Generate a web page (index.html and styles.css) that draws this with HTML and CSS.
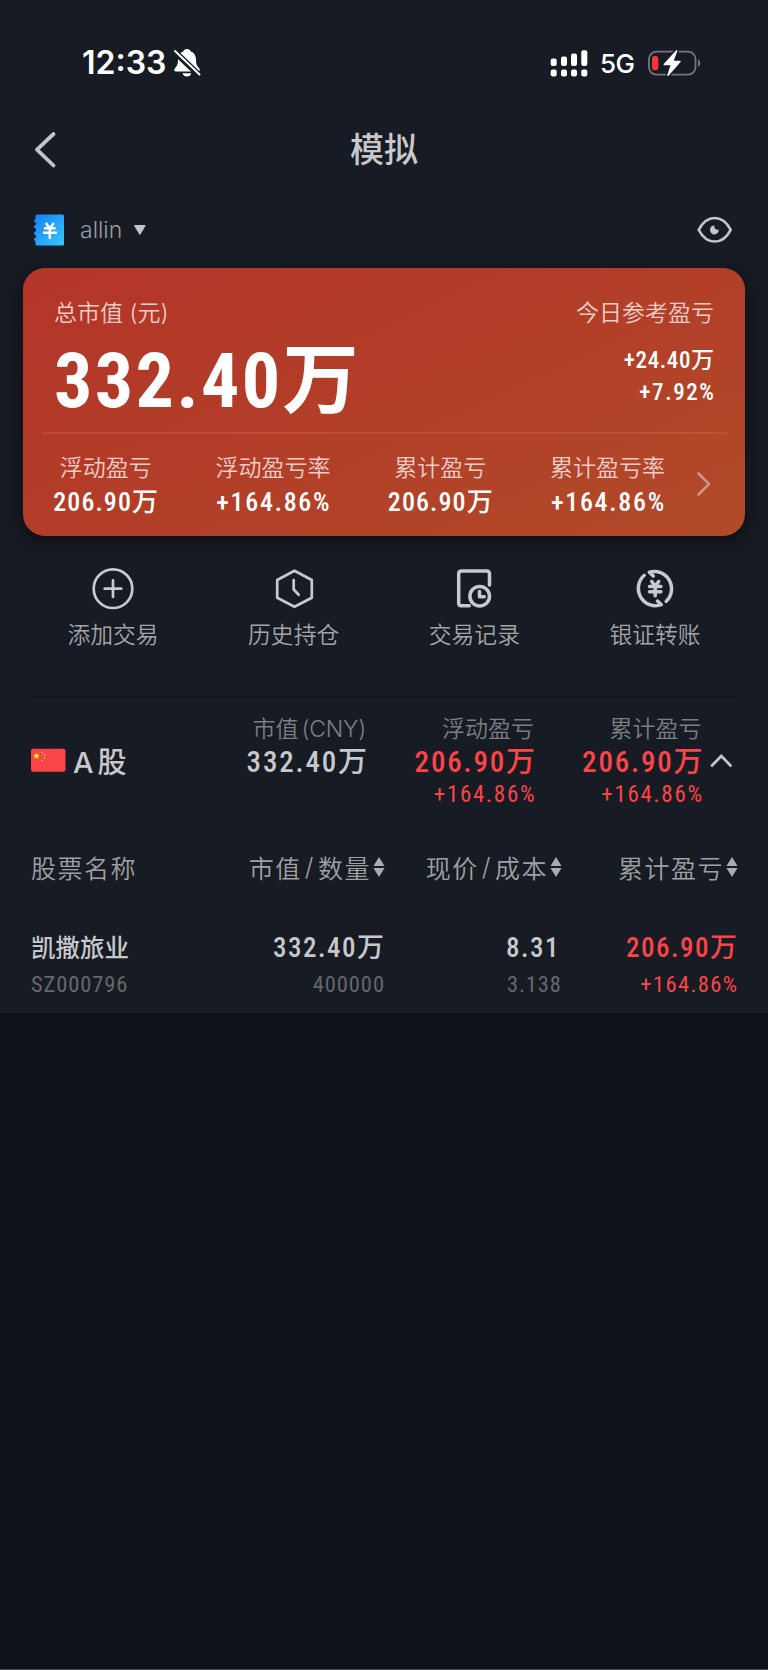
FILE: index.html
```
<!DOCTYPE html>
<html lang="zh-CN">
  <head>
    <meta charset="UTF-8" />
    <meta name="viewport" content="width=device-width, initial-scale=1.0" />
    <title>模拟</title>
    <link rel="stylesheet" href="styles.css">
  </head>
  <body>
    <main class="page">
      <div class="status-bar">
        <span class="time">12:33</span>
        <svg class="bell" width="28" height="30" viewBox="0 0 28 30">
          <path fill="#fff" d="M14 1c-2 0-3.300 1-3.700 2.400C6.500 4.600 5 8 5 12c0 5-1.500 6.500-3.200 8.600C.6 22.200 1.200 23.500 3 23.500h22c1.800 0 2.500-1.300 1.300-2.900C24.500 18.500 23 17 23 12c0-4-1.500-7.400-5.300-8.600C17.300 2 16 1 14 1z"/>
          <path fill="#fff" d="M9.500 25.200h8.800c-.4 2-2.200 3.300-4.400 3.300s-4-1.300-4.400-3.300z"/>
          <path stroke="#161b24" stroke-width="6" d="M1.500 3.500L26 27"/>
          <path stroke="#fff" stroke-width="2" stroke-linecap="round" d="M2 3L26.500 26.500"/>
        </svg>
        <svg class="signal" width="38" height="28" viewBox="0 0 38 28" fill="#fff">
          <rect x="0.700" y="9.500" width="6" height="7.500" rx="2"/>
          <rect x="11" y="7.500" width="6" height="9.500" rx="2"/>
          <rect x="21" y="4.500" width="6" height="12.500" rx="2"/>
          <rect x="31.300" y="1.300" width="6" height="15.700" rx="2"/>
          <rect x="0.700" y="20.500" width="6" height="7" rx="2"/>
          <rect x="11" y="20.500" width="6" height="7" rx="2"/>
          <rect x="21" y="20.500" width="6" height="7" rx="2"/>
          <rect x="31.300" y="20.500" width="6" height="7" rx="2"/>
        </svg>
        <span class="network">5G</span>
        <svg class="battery" width="53" height="28" viewBox="0 0 53 28">
          <rect x="1" y="2.700" width="46.500" height="23" rx="7.500" fill="none" stroke="#74777d" stroke-width="1.800"/>
          <path fill="#74777d" d="M50 10.500c1.500.6 2.300 2 2.300 3.700s-.8 3-2.300 3.600z"/>
          <rect x="4" y="7" width="6.300" height="14.300" rx="3" fill="#fb3436"/>
          <path fill="#fff" stroke="#161b24" stroke-width="3" paint-order="stroke" d="M28 1.500L15.700 15c-.5.700-.2 1.200.5 1.200h6.300L19.300 26c-.3 1.200.8 1.500 1.500.6L32.500 13c.5-.7.200-1.200-.5-1.200h-6.300L29.300 2.300c.3-1.100-.6-1.500-1.300-.8z"/>
        </svg>
      </div>

      <header class="navbar">
        <svg class="back" width="24" height="38" viewBox="0 0 24 38">
          <path d="M20.500 3L4 18.700L20.500 34.500" fill="none" stroke="#c4c4c6" stroke-width="3.800" stroke-linecap="round" stroke-linejoin="round"/>
        </svg>
        <h1>模拟</h1>
      </header>

      <div class="account">
        <svg width="32" height="32" viewBox="0 0 32 32">
          <defs>
            <linearGradient id="book" x1="0" y1="0" x2="1" y2="1">
              <stop offset="0" stop-color="#167dff"/>
              <stop offset="1" stop-color="#35c9ff"/>
            </linearGradient>
          </defs>
          <path fill="url(#book)" d="M4.500.5h24.700c1 0 1.800.8 1.800 1.800v27.400c0 1-.8 1.800-1.800 1.800H4.500c-1.200 0-2-.7-2-1.800v-1.900c0-1.200-1.500-1.300-1.500-2.600s2.300-1.200 2.300-2.700S1 20.800 1 19.200s2.300-1.500 2.300-3.200S1 14.400 1 12.800s2.300-1.500 2.300-3S1 8.400 1 7s1.500-1.400 1.500-2.600V2.300C2.500 1.200 3.300.5 4.500.5z"/>
          <path fill="none" stroke="#fff" stroke-width="2.500" d="M12.800 9l4 5.500 4-5.500M11 14.300h11.600M10 18.700h14M16.800 14v11"/>
        </svg>
        <span class="account-name">allin</span>
        <svg width="14" height="12" viewBox="0 0 14 12"><path fill="#c4c4c6" stroke="#c4c4c6" stroke-linejoin="round" d="M1.500 1.500h10.700L6.900 10.500z"/></svg>
        <svg class="eye" width="36" height="28" viewBox="0 0 36 28">
          <path fill="none" stroke="#c4c4c6" stroke-width="2.600" stroke-linejoin="round" d="M1.700 13.800C6 5.500 11 2 17.700 2s11.700 3.500 16 11.800C29.500 22 24.500 25.500 17.700 25.500S6 22 1.700 13.800z"/>
          <path fill="#c4c4c6" d="M17.300 9.300c-.6 2.800 1.500 4.800 4.500 4.500.1 2.600-1.800 4.600-4.300 4.600s-4.500-2-4.500-4.500 1.800-4.500 4.300-4.600z"/>
        </svg>
      </div>

      <section class="card">
        <div class="summary">
          <div class="total">
            <p class="label">总市值 (元)</p>
            <p class="total-value">332.40<i>万</i></p>
          </div>
          <div class="today">
            <p class="label">今日参考盈亏</p>
            <p class="today-value">+24.40<i>万</i></p>
            <p class="today-value rate">+7.92%</p>
          </div>
        </div>
        <div class="metrics">
          <div class="metric"><p class="label">浮动盈亏</p><p class="metric-value">206.90<i>万</i></p></div>
          <div class="metric"><p class="label">浮动盈亏率</p><p class="metric-value rate">+164.86%</p></div>
          <div class="metric"><p class="label">累计盈亏</p><p class="metric-value">206.90<i>万</i></p></div>
          <div class="metric"><p class="label">累计盈亏率</p><p class="metric-value rate">+164.86%</p></div>
          <svg class="more" width="16" height="26" viewBox="0 0 16 26">
            <path d="M2.500 2.500L13 13L2.500 23.500" fill="none" stroke="#fff" stroke-opacity=".42" stroke-width="2.600" stroke-linecap="round"/>
          </svg>
        </div>
      </section>

      <nav class="actions">
        <a class="action">
          <svg width="42" height="42" viewBox="0 0 42 42">
            <circle cx="21" cy="20.700" r="19.300"/>
            <path d="M21 12.400V29M12.700 20.700h16.600"/>
          </svg>
          <span>添加交易</span>
        </a>
        <a class="action">
          <svg width="42" height="42" viewBox="-1.500 -.5 42 42">
            <path d="M20 2.300l17.300 9.200v17.800L20 38.300 2.700 29.300V11.500z"/>
            <path d="M19.200 11.500V21l5 5.300"/>
          </svg>
          <span>历史持仓</span>
        </a>
        <a class="action heavy">
          <svg width="42" height="42" viewBox="-1 -.5 42 42">
            <path d="M35.500 16.500V5.300c0-1.800-1-2.800-2.800-2.800H7.500c-1.800 0-2.800 1-2.800 2.800v29.200c0 1.800 1 2.800 2.800 2.800h7.800"/>
            <circle cx="25.700" cy="27.700" r="9.800"/>
            <path d="M25.500 23v5.200h4.700"/>
          </svg>
          <span>交易记录</span>
        </a>
        <a class="action heavy">
          <svg width="42" height="42" viewBox="-1 -.5 42 42">
            <path d="M9.300 6.800A17.300 17.300 0 0 0 26.300 36.200L22.500 32.500M31.200 32.800A17.300 17.300 0 0 0 14.300 3.700L18.300 7.500"/>
            <path d="M16.700 13l3.500 4.800 3.500-4.800M14.500 18h11.400M14.500 23.300h11.400M20.200 18v9.300"/>
          </svg>
          <span>银证转账</span>
        </a>
      </nav>

      <section class="market">
        <div class="market-name">
          <svg width="35" height="24" viewBox="0 0 35 24">
            <rect width="34.500" height="23" x="0" y=".7" rx="2" fill="#fb4448"/>
            <path fill="#ff0" d="M5.500 4.500l.9 2.300 2.400.1-1.900 1.500.7 2.400-2.100-1.400-2.100 1.400.7-2.400-1.900-1.500 2.400-.1z"/>
            <path stroke="#ffd91a" stroke-width="1.300" stroke-dasharray="1.300 2.200" fill="none" d="M10.300 4.200C15 5.500 15 11 10.300 12.800"/>
          </svg>
          <strong>A<b>股</b></strong>
        </div>
        <div class="stat">
          <p class="label latin">市值 (CNY)</p>
          <p class="stat-value">332.40<i>万</i></p>
        </div>
        <div class="stat">
          <p class="label">浮动盈亏</p>
          <p class="stat-value up">206.90<i>万</i></p>
          <p class="stat-rate up">+164.86%</p>
        </div>
        <div class="stat">
          <p class="label">累计盈亏</p>
          <p class="stat-value up">206.90<i>万</i></p>
          <p class="stat-rate up">+164.86%</p>
        </div>
        <svg class="collapse" width="24" height="16" viewBox="0 0 24 16">
          <path d="M2 12.500L11.300 3L20.500 12.500" fill="none" stroke="#c4c4c6" stroke-width="2.800" stroke-linecap="round"/>
        </svg>
      </section>

      <section class="holdings">
        <div class="row head">
          <div>股票名称</div>
          <div>市值<em>/</em>数量<svg width="12" height="22" viewBox="0 0 12 22"><path d="M6 1l5.500 9H.5zM.500 12h11L6 21z"/></svg></div>
          <div>现价<em>/</em>成本<svg width="12" height="22" viewBox="0 0 12 22"><path d="M6 1l5.500 9H.5zM.500 12h11L6 21z"/></svg></div>
          <div>累计盈亏<svg width="12" height="22" viewBox="0 0 12 22"><path d="M6 1l5.500 9H.5zM.500 12h11L6 21z"/></svg></div>
        </div>
        <div class="row stock">
          <div><p class="stock-name">凯撒旅业</p><p class="sub">SZ000796</p></div>
          <div><p class="num">332.40<i>万</i></p><p class="sub">400000</p></div>
          <div><p class="num price">8.31</p><p class="sub">3.138</p></div>
          <div><p class="num up">206.90<i>万</i></p><p class="sub up">+164.86%</p></div>
        </div>
      </section>
    </main>
  </body>
</html>
```
FILE: styles.css
```
* {
  box-sizing: border-box;
}
html,
body {
  margin: 0;
  height: 1670px;
}
body {
  background: #0d1118;
  border-bottom: 1px solid #4a4c51;
  color: #c8c8ca;
  font-family: Inter, "Noto Sans CJK SC", sans-serif;
}
p,
h1 {
  margin: 0;
}
i,
em {
  font-style: normal;
}
i {
  letter-spacing: 0;
}
svg {
  display: block;
  flex: none;
}

.page {
  height: 1013px;
  background: #161b24;
}

.status-bar {
  display: flex;
  align-items: center;
  height: 126px;
  padding: 0 67px 0 82px;
  color: #fff;
}
.time {
  width: 91px;
  font-size: 32px;
  font-weight: 600;
  line-height: 40px;
}
.bell {
  margin-right: auto;
}
.network {
  width: 47px;
  margin-right: 13px;
  padding: 1px 0 0 12px;
  font-size: 26px;
  font-weight: 450;
  letter-spacing: -0.5px;
  line-height: 32px;
}

.navbar {
  display: grid;
  grid-template-columns: 48px 1fr 48px;
  align-items: center;
  height: 48px;
  padding: 0 33px;
}
.navbar h1 {
  font-size: 34px;
  font-weight: 500;
  line-height: 48px;
  text-align: center;
}

.account {
  display: flex;
  align-items: center;
  height: 94px;
  padding: 18px 35px 0 33px;
}
.account-name {
  width: 41px;
  margin: 0 12px 0 15px;
  color: #9c9ca0;
  font-size: 23px;
  font-weight: 350;
  line-height: 30px;
}
.eye {
  margin-left: auto;
}

.label {
  font-size: 23px;
  font-weight: 350;
  line-height: 30px;
  white-space: nowrap;
}

.total-value,
.today-value,
.metric-value,
.stat-value,
.stat-rate,
.num,
.sub {
  font-family: Roboto, "Noto Sans CJK SC", sans-serif;
  font-stretch: 85%;
  font-weight: 500;
  white-space: nowrap;
}

.card {
  height: 268px;
  margin: 0 23px;
  border-radius: 22px;
  background: linear-gradient(155deg, #b43529 0%, #b23d28 45%, #b14b29 100%);
  box-shadow: 0 6px 16px rgba(15, 10, 14, 0.75);
  color: #fff;
}
.card .label {
  color: #f3cdc8;
}
.summary {
  display: flex;
  justify-content: space-between;
  height: 166px;
  margin: 0 18px 0 19px;
  padding: 30px 13px 0 12px;
  border-bottom: 2px solid rgba(255, 150, 110, 0.16);
}
.total-value {
  margin-top: 13px;
  font-size: 76px;
  font-weight: 700;
  line-height: 80px;
  letter-spacing: 2.4px;
}
.today {
  text-align: right;
}
.today-value {
  font-size: 23px;
  line-height: 32px;
  letter-spacing: 0.6px;
}
.today .rate {
  margin-right: -1.6px;
  letter-spacing: 1.6px;
}
.today .label {
  margin-bottom: 17px;
}
.metrics {
  display: flex;
  height: 102px;
  margin-left: -1px;
  padding-top: 19px;
}
.metric {
  width: 167.3px;
  text-align: center;
}
.metric-value {
  margin-top: 3px;
  font-size: 26px;
  line-height: 32px;
  letter-spacing: 1.1px;
}
.metric .rate {
  margin-right: -1.7px;
  letter-spacing: 1.7px;
}
.more {
  margin: 18px 0 0 5px;
}

.actions {
  display: grid;
  grid-template-columns: repeat(4, 180.7px);
  justify-content: center;
  height: 160px;
  padding-top: 32px;
}
.action {
  display: flex;
  flex-direction: column;
  align-items: center;
  color: #a4a4a7;
  font-size: 22.8px;
  font-weight: 350;
  line-height: 30px;
}
.action svg {
  margin-bottom: 10px;
  fill: none;
  stroke: #c9c9cb;
  stroke-width: 2.7;
  stroke-linecap: round;
  stroke-linejoin: round;
}
.action.heavy svg {
  stroke-width: 3.5;
}

.market {
  display: flex;
  height: 135px;
  margin: 0 31px;
  padding-top: 17px;
  border-top: 1px solid #101319;
  border-bottom: 1px solid #101319;
}
.market-name {
  display: flex;
  align-items: center;
  width: 168px;
  height: 30px;
  margin-top: 31px;
}
.market-name strong {
  display: flex;
  align-items: baseline;
  gap: 4px;
  margin-left: 7px;
  font-size: 29px;
  font-weight: 500;
}
.market-name b {
  font-weight: 500;
}
.stat {
  width: 167.5px;
  padding-right: 0.5px;
  text-align: right;
}
.stat:nth-child(2) {
  margin-right: 0.5px;
}
.stat .label {
  color: #7d7e82;
}
.latin {
  letter-spacing: -0.2px;
  word-spacing: -3px;
}
.stat-value {
  margin: 2px -1px 0 0;
  font-size: 29px;
  line-height: 32px;
  letter-spacing: 1.8px;
}
.stat-rate {
  margin: 1px -2.2px 0 0;
  font-size: 23px;
  font-weight: 450;
  line-height: 32px;
  letter-spacing: 1.7px;
}
.collapse {
  margin: 39px 0 0 8px;
}
.up,
.sub.up {
  color: #fb4448;
}

.row {
  display: grid;
  grid-template-columns: 176px 177px 177px 176px;
  padding: 0 31px;
}
.row div:not(:first-child) {
  text-align: right;
}
.head {
  align-items: center;
  height: 72px;
  color: #a0a0a3;
  font-size: 25px;
  font-weight: 350;
  letter-spacing: 1.5px;
}
.head div {
  display: flex;
  align-items: center;
  white-space: nowrap;
}
.head div:not(:first-child) {
  justify-content: flex-end;
  margin-right: -1px;
}
.head em {
  padding: 0 3px;
}
.head svg {
  margin-left: 2px;
  fill: #a9a9b8;
}
.stock {
  padding-top: 28px;
}
.stock-name {
  font-size: 24.5px;
  font-weight: 500;
  line-height: 34px;
}
.num {
  font-size: 27px;
  line-height: 34px;
  letter-spacing: 1.5px;
}
.price {
  padding-right: 1px;
}
.sub {
  margin: 3px -0.9px 0 0;
  color: #66676b;
  font-size: 22.5px;
  font-weight: 400;
  line-height: 32px;
  letter-spacing: 0.9px;
}
.sub.up {
  margin-right: -1.4px;
  font-weight: 450;
  letter-spacing: 1.4px;
}
```
